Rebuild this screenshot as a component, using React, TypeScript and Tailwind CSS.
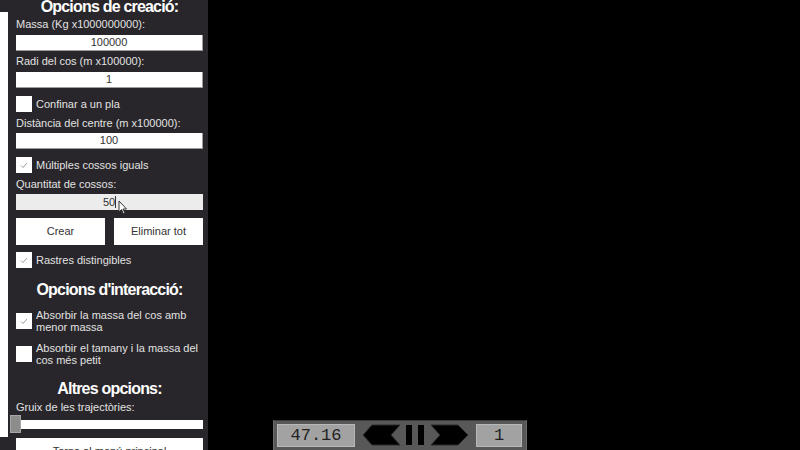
import React from "react";

function Check() {
  return (
    <svg width="10" height="10" viewBox="0 0 10 10" className="block">
      <polyline points="2,5.5 4,7.5 8,3" fill="none" stroke="#9a9a9a" strokeWidth="1" />
    </svg>
  );
}

function CheckRow({ checked, label, className = "" }: { checked?: boolean; label: React.ReactNode; className?: string }) {
  return (
    <div className={`flex items-center gap-1 ${className}`}>
      <div className="w-4 h-4 shrink-0 bg-white flex items-center justify-center">
        {checked && <Check />}
      </div>
      <span className="text-[11px] leading-[12px] text-[#e2e2e2] whitespace-nowrap">{label}</span>
    </div>
  );
}

function Label({ text, className = "" }: { text: string; className?: string }) {
  return <div className={`h-[14px] text-[11px] leading-[14px] text-[#e2e2e2] whitespace-nowrap ${className}`}>{text}</div>;
}

function Field({ value, className = "" }: { value: string; className?: string }) {
  return (
    <div className={`h-4 bg-white border border-[#9c9c9c] border-t-0 border-l-0 text-[11px] leading-[15px] text-center text-[#333] ${className}`}>
      {value}
    </div>
  );
}

function Title({ text, className = "" }: { text: string; className?: string }) {
  return (
    <div className={`h-[18px] text-[16px] leading-[18px] font-bold tracking-[-0.8px] text-white text-center whitespace-nowrap ${className}`}>
      {text}
    </div>
  );
}

export default function App() {
  return (
    <div
      className="w-[800px] h-[450px] bg-black relative overflow-hidden flex"
      style={{ fontFamily: '"Liberation Sans", Arial, sans-serif' }}
    >
      {/* side panel */}
      <div className="w-[208px] h-full bg-[#28262a] flex">
        <div className="w-2 mt-3 h-[425px] bg-white shrink-0" />
        <div className="flex-1 pl-2 pr-[5px] pt-[1px]">
          <Title text="Opcions de creació:" className="-mt-[3px]" />
          <Label text="Massa (Kg x1000000000):" className="mt-[1px]" />
          <Field value="100000" className="mt-1" />
          <Label text="Radi del cos (m x100000):" className="mt-[3px]" />
          <Field value="1" className="mt-1" />
          <CheckRow label="Confinar a un pla" className="mt-2" />
          <Label text="Distància del centre (m x100000):" className="mt-1" />
          <Field value="100" className="mt-[3px]" />
          <CheckRow checked label="Múltiples cossos iguals" className="mt-2" />
          <Label text="Quantitat de cossos:" className="mt-1" />
          <div className="relative mt-[3px] h-4 bg-[#ececec] text-[11px] leading-[16px] text-center text-[#333]">
            50<span className="inline-block w-px h-[12px] bg-[#333] align-[-2px]" />
            <svg width="10" height="15" viewBox="0 0 10 15" className="absolute left-[102px] top-[6px]">
              <path d="M1 1 L1 12 L3.5 9.5 L5.5 14 L7 13.3 L5 9 L8.5 9 Z" fill="white" stroke="#333" strokeWidth="1" />
            </svg>
          </div>
          <div className="mt-2 flex gap-[9px]">
            <div className="flex-1 h-[27px] bg-white text-[11px] leading-[27px] text-center text-[#333]">Crear</div>
            <div className="flex-1 h-[27px] bg-white text-[11px] leading-[27px] text-center text-[#333]">Eliminar tot</div>
          </div>
          <CheckRow checked label="Rastres distingibles" className="mt-[7px]" />
          <Title text="Opcions d'interacció:" className="mt-[13px]" />
          <CheckRow
            checked
            label={<>Absorbir la massa del cos amb<br />menor massa</>}
            className="mt-[10px] h-6"
          />
          <CheckRow
            label={<>Absorbir el tamany i la massa del<br />cos més petit</>}
            className="mt-[9px] h-6"
          />
          <Title text="Altres opcions:" className="mt-[14px]" />
          <Label text="Gruix de les trajectòries:" className="mt-[2px]" />
          <div className="relative mt-[1px] h-[18px] flex items-center">
            <div className="w-full h-[9px] bg-white" />
            <div className="absolute -left-[6px] top-0 w-[11px] h-[18px] bg-[#8c8c8c] border border-[#a5a5a5]" />
          </div>
          <div className="mt-[5px] h-[27px] bg-white text-[11px] leading-[27px] text-center text-[#333]">
            Torna al menú principal
          </div>
        </div>
      </div>

      {/* bottom time controls */}
      <div className="absolute left-[273px] top-[420px] w-[254px] h-[32px] bg-[#585858] border border-[#6c6c6c] border-t-[#3c3c3c] flex items-start pt-[3px] pl-[3px]">
        <div
          className="w-[78px] h-[23px] bg-[#a2a2a2] border border-[#b8b8b8] text-[17px] leading-[21px] text-center text-[#222]"
          style={{ fontFamily: '"Liberation Mono", "Courier New", monospace' }}
        >
          47.16
        </div>
        <svg width="121" height="30" viewBox="0 0 121 30" className="-mt-[4px]">
          <polygon points="8,15 17,5 45,5 36,15 45,25 17,25" fill="black" stroke="#2a2a2a" />
          <rect x="51" y="5" width="6" height="20" fill="black" />
          <rect x="63" y="5" width="6" height="20" fill="black" />
          <polygon points="76,5 103,5 113,15 103,25 76,25 85,15" fill="black" stroke="#2a2a2a" />
        </svg>
        <div
          className="w-[46px] h-[23px] bg-[#a2a2a2] border border-[#b8b8b8] text-[17px] leading-[21px] text-center text-[#222]"
          style={{ fontFamily: '"Liberation Mono", "Courier New", monospace' }}
        >
          1
        </div>
      </div>
    </div>
  );
}
